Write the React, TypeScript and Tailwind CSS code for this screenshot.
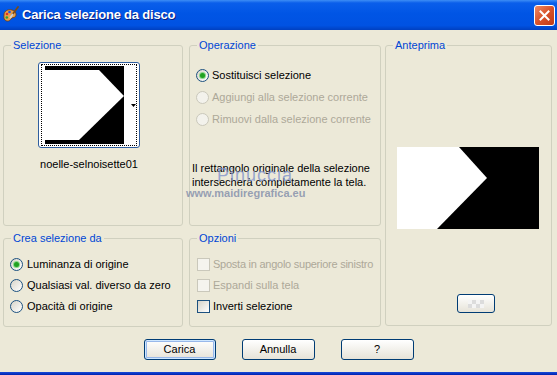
import React from "react";

function Radio({ checked = false, disabled = false }: { checked?: boolean; disabled?: boolean }) {
  return (
    <span
      className={`inline-flex w-[13px] h-[13px] shrink-0 rounded-full border items-center justify-center ${
        disabled
          ? "border-[#CAC8BB] bg-[#F3F2EC]"
          : "border-[#1C5180] bg-[linear-gradient(135deg,#D8D4C8,#FFFFFF)]"
      }`}
    >
      {checked && <span className="w-[5px] h-[5px] rounded-full bg-[#21A121] shadow-[0_0_0_1px_#8AD88A]" />}
    </span>
  );
}

function Check({ disabled = false }: { disabled?: boolean }) {
  return (
    <span
      className={`inline-block w-[13px] h-[13px] shrink-0 border ${
        disabled
          ? "border-[#CAC8BB] bg-[#F5F4EE]"
          : "border-[#1C5180] bg-[linear-gradient(135deg,#D6D3C8,#FFFFFF)]"
      }`}
    />
  );
}

function Group({
  label,
  className = "",
  children,
}: {
  label: string;
  className?: string;
  children?: React.ReactNode;
}) {
  return (
    <div className={`relative border border-[#D0D0BF] rounded-[3px] ${className}`}>
      <span className="absolute -top-[8px] left-[7px] px-[2px] bg-[#ECE9D8] text-[#0046D5] leading-[14px] whitespace-nowrap">
        {label}
      </span>
      {children}
    </div>
  );
}

function XPButton({ children, def = false, w }: { children: React.ReactNode; def?: boolean; w: string }) {
  return (
    <button
      className={`${w} h-[21px] rounded-[3px] border border-[#003C74] bg-linear-to-b from-white to-[#E6E3D8] flex items-center justify-center leading-none ${
        def ? "shadow-[inset_0_0_0_1px_#CEE7FF,inset_0_0_0_2px_#98B8EA]" : ""
      }`}
    >
      {children}
    </button>
  );
}

function PspIcon() {
  return (
    <svg width="18" height="18" viewBox="0 0 18 18">
      <path d="M2 9 C2 5 6 3 10 4 C14 5 15 9 13 11 C12 12 10 11 9 13 C8 15 5 16 3 14 C1.5 12.5 2 11 2 9 Z" fill="#E8A04A" stroke="#6B3A10" strokeWidth="0.8" />
      <circle cx="5" cy="8" r="1.3" fill="#E03020" />
      <circle cx="7.5" cy="6" r="1.3" fill="#2050E0" />
      <circle cx="4.8" cy="11.5" r="1.3" fill="#30A030" />
      <path d="M16 1 L10 9" stroke="#7A4A18" strokeWidth="1.8" strokeLinecap="round" />
      <path d="M10.5 8.5 L8.5 11.5" stroke="#D0D0D0" strokeWidth="2" strokeLinecap="round" />
    </svg>
  );
}

export default function App() {
  return (
    <div className="relative w-[557px] h-[375px] flex flex-col bg-[#ECE9D8] text-[11px] text-black font-['Liberation_Sans',Arial,sans-serif] overflow-hidden whitespace-nowrap">
      {/* Title bar */}
      <div className="h-[30px] shrink-0 flex items-center bg-[linear-gradient(180deg,#3D8DF5_0%,#0A5EEA_10%,#0055E5_45%,#0052E2_85%,#0040C0_100%)] pl-[2px] pr-[2px]">
        <PspIcon />
        <span className="ml-[2px] text-white font-bold text-[13px] tracking-[-0.2px] [text-shadow:1px_1px_0_#0A1E80]">
          Carica selezione da disco
        </span>
        <div className="ml-auto w-[21px] h-[21px] rounded-[3px] border border-white bg-[linear-gradient(135deg,#F08A64,#D8522A_50%,#C03A18)] flex items-center justify-center">
          <svg width="11" height="11" viewBox="0 0 11 11">
            <path d="M1.5 1.5 L9.5 9.5 M9.5 1.5 L1.5 9.5" stroke="white" strokeWidth="2" strokeLinecap="square" />
          </svg>
        </div>
      </div>

      {/* Body */}
      <div className="flex-1 flex flex-col pt-[15px] px-[3px]">
        <div className="flex">
          {/* Column 1 */}
          <div className="w-[180px] flex flex-col gap-[12px]">
            <Group label="Selezione" className="h-[181px]">
              <div className="pt-[16px] pl-[34px] w-[136px] flex flex-col items-center">
                <div className="w-[102px] h-[86px] border border-[#2F5E9E] rounded-[3px] bg-white px-[2px] py-[1px]">
                  <div className="h-full border border-dotted border-black flex pl-[3px] py-[1px]">
                    <svg width="79" height="78" viewBox="0 0 79 78" className="shrink-0">
                      <rect width="79" height="78" fill="black" />
                      <polygon points="0,4 54,4 79,30 34,74 0,74" fill="white" />
                    </svg>
                    <div className="flex-1 relative">
                      <svg width="5" height="3" viewBox="0 0 5 3" className="absolute right-[0px] top-[38px]">
                        <polygon points="0,0 5,0 2.5,3" fill="black" />
                      </svg>
                    </div>
                  </div>
                </div>
                <div className="mt-[9px] leading-[14px] w-[102px] text-center">noelle-selnoisette01</div>
              </div>
            </Group>
            <Group label="Crea selezione da" className="h-[89px]">
              <div className="pt-[15px] pl-[6px] flex flex-col">
                <div className="h-[21px] flex items-center gap-[4px]">
                  <Radio checked />
                  <span>Luminanza di origine</span>
                </div>
                <div className="h-[21px] flex items-center gap-[4px]">
                  <Radio />
                  <span>Qualsiasi val. diverso da zero</span>
                </div>
                <div className="h-[21px] flex items-center gap-[4px]">
                  <Radio />
                  <span>Opacità di origine</span>
                </div>
              </div>
            </Group>
          </div>

          {/* Column 2 */}
          <div className="w-[192px] ml-[6px] flex flex-col gap-[12px]">
            <Group label="Operazione" className="h-[181px]">
              <div className="pt-[18px] pl-[2px] flex flex-col">
                <div className="h-[22px] pl-[4px] flex items-center gap-[3px]">
                  <Radio checked />
                  <span>Sostituisci selezione</span>
                </div>
                <div className="h-[22px] pl-[4px] flex items-center gap-[3px] text-[#ACA899]">
                  <Radio disabled />
                  <span>Aggiungi alla selezione corrente</span>
                </div>
                <div className="h-[22px] pl-[4px] flex items-center gap-[3px] text-[#ACA899]">
                  <Radio disabled />
                  <span>Rimuovi dalla selezione corrente</span>
                </div>
                <div className="mt-[31px] leading-[14px]">
                  Il rettangolo originale della selezione
                  <br />
                  intersecherà completamente la tela.
                </div>
              </div>
            </Group>
            <Group label="Opzioni" className="h-[89px]">
              <div className="pt-[15px] pl-[7px] flex flex-col">
                <div className="h-[21px] flex items-center gap-[3px] text-[#ACA899]">
                  <Check disabled />
                  <span className="tracking-[-0.25px]">Sposta in angolo superiore sinistro</span>
                </div>
                <div className="h-[21px] flex items-center gap-[3px] text-[#ACA899]">
                  <Check disabled />
                  <span>Espandi sulla tela</span>
                </div>
                <div className="h-[21px] flex items-center gap-[3px]">
                  <Check />
                  <span>Inverti selezione</span>
                </div>
              </div>
            </Group>
          </div>

          {/* Column 3 */}
          <div className="w-[167px] ml-[4px]">
            <Group label="Anteprima" className="h-[281px]">
              <div className="pt-[101px] pl-[11px] flex flex-col">
                <svg width="142" height="82" viewBox="0 0 142 82">
                  <rect width="142" height="82" fill="black" />
                  <polygon points="0,0 62,0 90,31 40,82 0,82" fill="white" />
                </svg>
                <div className="mt-[65px] ml-[60px] w-[38px] h-[19px] rounded-[3px] border border-[#003C74] bg-linear-to-b from-white to-[#E6E3D8] flex items-center justify-center">
                  <svg width="16" height="8" viewBox="0 0 16 8">
                    <rect x="0" y="0" width="4" height="4" fill="#F4F4F4" />
                    <rect x="8" y="0" width="4" height="4" fill="#F4F4F4" />
                    <rect x="4" y="4" width="4" height="4" fill="#F4F4F4" />
                    <rect x="12" y="4" width="4" height="4" fill="#F4F4F4" />
                    <rect x="4" y="0" width="4" height="4" fill="#DCDCDC" />
                    <rect x="12" y="0" width="4" height="4" fill="#DCDCDC" />
                    <rect x="0" y="4" width="4" height="4" fill="#DCDCDC" />
                    <rect x="8" y="4" width="4" height="4" fill="#DCDCDC" />
                  </svg>
                </div>
              </div>
            </Group>
          </div>
        </div>

        {/* Buttons */}
        <div className="mt-[12px] flex justify-center gap-[26px]">
          <XPButton def w="w-[72px]">Carica</XPButton>
          <XPButton w="w-[73px]">Annulla</XPButton>
          <XPButton w="w-[73px]">?</XPButton>
        </div>
      </div>

      {/* Bottom window border */}
      <div className="h-[3px] shrink-0 bg-linear-to-b from-[#1A4AD8] to-[#0020B0]" />

      {/* Watermark */}
      <div className="absolute left-[217px] top-[166px] text-[18px] leading-none tracking-[1px] text-[#8193CC]/80 pointer-events-none">
        Pinuccia
      </div>
      <div className="absolute left-[186px] top-[188px] text-[11px] leading-none font-bold text-[#7F8BA8]/80 pointer-events-none">
        www.maidiregrafica.eu
      </div>
    </div>
  );
}
